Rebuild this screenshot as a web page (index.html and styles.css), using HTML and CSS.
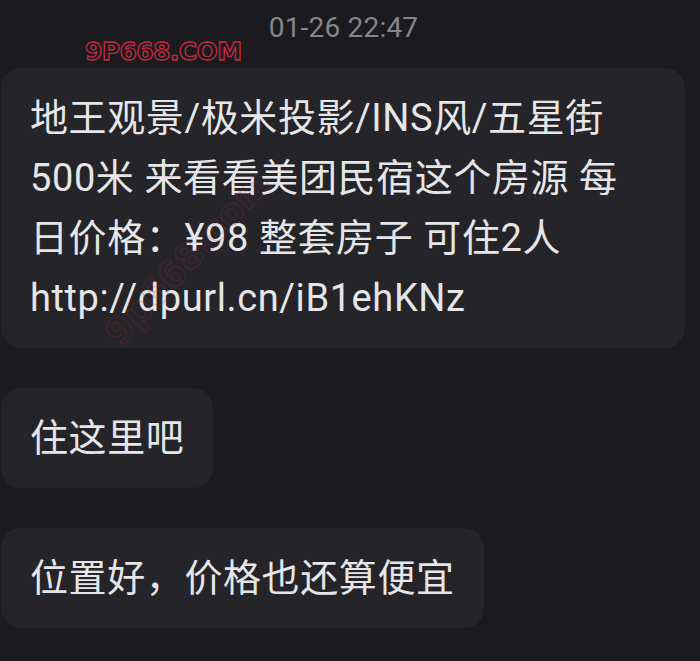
FILE: index.html
```html
<!DOCTYPE html>
<html lang="zh-CN">
<head>
  <meta charset="UTF-8">
  <meta name="viewport" content="width=device-width, initial-scale=1.0">
  <title>聊天记录</title>
  <link rel="stylesheet" href="styles.css">
</head>
<body>
  <div class="chat">
    <div class="time-row">
      <span class="brand">9P668.COM</span>
      <span class="time">01-26 22:47</span>
    </div>
    <div class="msg msg-long">地王观景/极米投影/INS风/五星街<br>500米 来看看美团民宿这个房源 每<br>日价格：¥98 整套房子 可住2人<br>http://dpurl.cn/iB1ehKNz</div>
    <div class="msg">住这里吧</div>
    <div class="msg">位置好，价格也还算便宜</div>
    <span class="stamp">9p668.com</span>
  </div>
</body>
</html>
```

FILE: styles.css
```css
body { margin: 0; background: #1b1a1f; font-family: Roboto, "Noto Sans CJK SC", sans-serif; overflow: hidden; }
.chat { position: relative; display: flex; flex-direction: column; align-items: flex-start; gap: 40px; padding-left: 1px; height: 661px; box-sizing: border-box; }
.time-row { position: relative; width: 100%; height: 28px; line-height: 56px; text-align: center; }
.time { color: #85858b; font-size: 28px; margin-left: -14px; letter-spacing: 0.2px; }
.brand { position: absolute; left: 84px; top: 38px; line-height: 28px; font-family: "DejaVu Sans", sans-serif; font-weight: bold; font-size: 25px; letter-spacing: -0.6px; color: #1b1a1f; -webkit-text-stroke: 1.3px #c62b42; }
.msg { background: #252429; color: #e6e6e8; font-size: 38px; line-height: 60px; padding: 20px 29px; border-radius: 20px; letter-spacing: 0.6px; white-space: nowrap; }
.msg-long { width: 626px; }
.stamp { position: absolute; left: 76px; top: 237px; transform: rotate(-47deg); font-family: "DejaVu Sans", sans-serif; font-weight: bold; font-size: 36px; color: transparent; -webkit-text-stroke: 1px rgba(170, 40, 55, 0.3); }
```
